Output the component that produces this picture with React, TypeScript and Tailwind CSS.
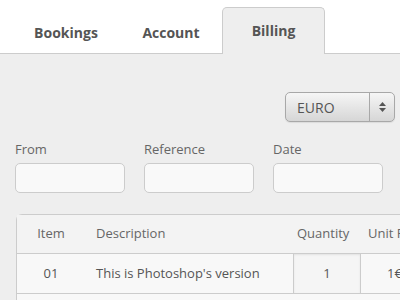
import React from "react";

export default function App() {
  return (
    <div className="w-[400px] h-[300px] overflow-hidden bg-[#eeeeee] flex flex-col" style={{ fontFamily: '"Open Sans", sans-serif' }}>
      <div className="h-[54px] bg-white border-b border-[#cccccc] flex items-end pl-[15px] shrink-0">
        <div className="w-[102px] h-[46px] -mb-px flex items-center justify-center pt-[2px] text-[14px] font-bold text-[#555555]">Bookings</div>
        <div className="w-[102px] h-[46px] -mb-px ml-[3px] flex items-center justify-center pt-[2px] text-[14px] font-bold text-[#555555]">Account</div>
        <div className="w-[103px] h-[47px] -mb-px bg-[#eeeeee] border border-b-0 border-[#cccccc] rounded-t-[5px] flex items-center justify-center pb-[1px] text-[14px] font-bold text-[#555555]">Billing</div>
      </div>
      <div className="flex justify-end pr-[5px] pt-[38px]">
        <div className="w-[110px] h-[30px] rounded-[5px] border border-[#a8a8a8] bg-gradient-to-b from-[#f6f6f6] to-[#d6d6d6] flex shadow-[0_1px_1px_rgba(0,0,0,0.08)]">
          <div className="flex-1 flex items-center pl-[11px] text-[14px] text-[#555555]">EURO</div>
          <div className="w-[25px] border-l border-[#a8a8a8] flex flex-col items-center justify-center gap-[2px]">
            <svg width="7" height="4" viewBox="0 0 7 4"><path d="M3.5 0 L7 4 L0 4 Z" fill="#555" /></svg>
            <svg width="7" height="4" viewBox="0 0 7 4"><path d="M0 0 L7 0 L3.5 4 Z" fill="#555" /></svg>
          </div>
        </div>
      </div>
      <div className="flex gap-[19px] pl-[15px] pt-[18px]">
        {["From", "Reference", "Date"].map((l) => (
          <div key={l} className="flex flex-col">
            <div className="text-[13px] leading-[18px] text-[#666666] mb-[5px]">{l}</div>
            <div className="w-[110px] h-[30px] rounded-[5px] border border-[#cccccc] bg-[#f9f9f9]" />
          </div>
        ))}
      </div>
      <div className="pl-[16px] pt-[21px]">
        <div className="w-[420px] rounded-tl-[6px] border-t border-l border-[#cccccc] bg-[#f8f8f8]">
          <div className="h-[39px] grid grid-cols-[68px_208px_68px_76px] items-center bg-[#f3f3f3] border-b border-[#cccccc] text-[13px] text-[#666666]">
            <div className="text-center">Item</div>
            <div className="pl-[11px]">Description</div>
            <div className="pl-[4px] whitespace-nowrap">Quantity</div>
            <div className="pl-[7px] whitespace-nowrap">Unit Price</div>
          </div>
          <div className="h-[40px] grid grid-cols-[68px_208px_68px_76px] items-stretch border-b border-[#cccccc] text-[13px] text-[#555555]">
            <div className="flex items-center justify-center">01</div>
            <div className="flex items-center pl-[11px] whitespace-nowrap">This is Photoshop's version</div>
            <div className="flex items-center justify-center bg-[#f5f5f5] border-x border-[#cccccc] shadow-[inset_0_1px_2px_rgba(0,0,0,0.08)]">1</div>
            <div className="flex items-center pl-[26px]">1€</div>
          </div>
          <div className="h-[20px] bg-[#f8f8f8]" />
        </div>
      </div>
    </div>
  );
}
